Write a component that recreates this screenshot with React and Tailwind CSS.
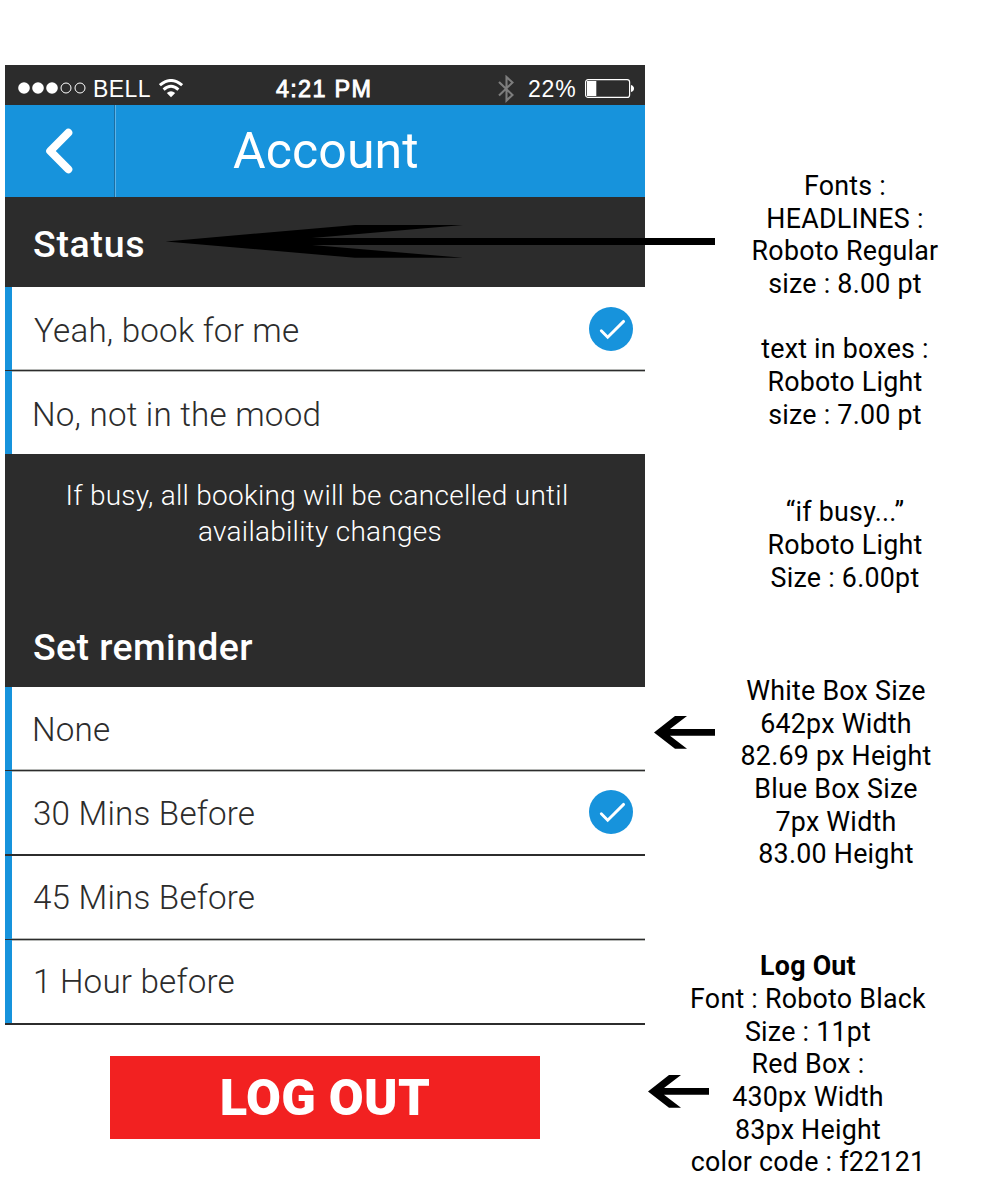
import React from 'react';

const Check = () => (
  <svg viewBox="0 0 44 44" className="h-11 w-11 shrink-0">
    <circle cx="22" cy="22" r="22" fill="#1793dc" />
    <path d="M12.3 23.8 L18.7 30.2 L34.6 14.4" fill="none" stroke="#fff" strokeWidth="2.9" strokeLinecap="round" />
  </svg>
);

function Row({ label, checked, indent, textShift, checkShift }) {
  return (
    <div className="flex h-[82px] border-l-[7px] border-[#1793dc] bg-white">
      <div className={`flex flex-1 items-center justify-between pr-3 ${indent}`}>
        <span className={`whitespace-nowrap text-[33.2px] font-light leading-none tracking-[0.2px] text-[#2c2c2c] ${textShift}`}>{label}</span>
        {checked && <div className={checkShift}><Check /></div>}
      </div>
    </div>
  );
}

const Line = ({ soft }) =>
  soft ? (
    <div className="h-[3px] border-l-[7px] border-[#1793dc] bg-[#b5b7b5] pt-px">
      <div className="-ml-[7px] h-px bg-[#2c2c2c]" />
    </div>
  ) : (
    <div className="h-[2px] bg-[#2c2c2c]" />
  );

function Note({ lines, className }) {
  return (
    <div className={`w-[260px] text-center text-[26.8px] leading-[32.7px] tracking-[0.25px] text-black ${className}`}>
      {lines.map((l, i) => (
        <p key={i} className="whitespace-nowrap">{l}</p>
      ))}
    </div>
  );
}

const SmallArrow = ({ className }) => (
  <svg viewBox="0 0 61 34" className={`absolute h-[34px] w-[61px] ${className}`}>
    <path d="M0 16.4 L21 0 H33 L16 13 H61 V19.8 H16 L33 32.8 H21 Z" fill="#000" />
  </svg>
);

const Wifi = () => (
  <svg viewBox="0 0 24 19" className="h-[19px] w-6">
    <g fill="none" stroke="#fff" strokeWidth="3">
      <path d="M0.9 6.2 Q12 -3.2 23.1 6.2" />
      <path d="M4.6 10.6 Q12 4 19.4 10.6" />
    </g>
    <path d="M7.8 13.9 Q12 10.4 16.2 13.9 L12 18.2 Z" fill="#fff" />
  </svg>
);

export default function App() {
  return (
    <div className="relative flex h-[1200px] w-[1000px] overflow-hidden bg-white font-['Roboto',sans-serif]">
      <main className="ml-[5px] mt-[65px] w-[640px] shrink-0">
        <div className="flex h-10 items-start bg-[#2c2c2c] pt-[10px] font-['Liberation_Sans',sans-serif] text-[23px] leading-[28px] text-white">
          <svg viewBox="0 0 69 12" className="ml-[12.5px] mt-[7px] h-3 w-[69px]">
            <circle cx="6" cy="6" r="5.8" fill="#fff" />
            <circle cx="20" cy="6" r="5.8" fill="#fff" />
            <circle cx="34" cy="6" r="5.8" fill="#fff" />
            <circle cx="48" cy="6" r="5" fill="none" stroke="#fff" />
            <circle cx="62" cy="6" r="5" fill="none" stroke="#fff" />
          </svg>
          <span className="ml-[6.5px] w-[66px] whitespace-nowrap tracking-[0.4px]">BELL</span>
          <div className="mt-1"><Wifi /></div>
          <span className="ml-[93px] w-[222px] whitespace-nowrap text-[23.4px] tracking-[1.3px] [-webkit-text-stroke:0.9px_white]">4:21 PM</span>
          <svg viewBox="0 0 16 28" className="h-7 w-4">
            <path d="M1 7 L14.5 20 L8.5 25.5 V2 L14.5 7.5 L1 20.5" fill="none" stroke="#7d7d7d" strokeWidth="2.1" />
          </svg>
          <span className="ml-[14px] w-[57px] whitespace-nowrap tracking-[0.8px]">22%</span>
          <svg viewBox="0 0 50 20" className="mt-1 h-5 w-[50px]">
            <rect x="0.6" y="0.6" width="44" height="17.8" rx="2.5" fill="none" stroke="#fff" strokeWidth="1.2" />
            <rect x="2" y="2" width="9.3" height="15" fill="#fff" />
            <path d="M46 6 Q49 7 49 9.5 Q49 12 46 13 Z" fill="#fff" />
          </svg>
        </div>
        <header className="flex h-[92px] items-center bg-[#1793dc] text-white">
          <div className="flex h-full w-[111px] items-center border-r border-[#5cb3e8]">
            <div className="flex h-full w-[110px] items-center border-r border-[#1c6ea2]">
              <svg viewBox="0 0 28 46" className="ml-10 h-[46px] w-7">
                <path d="M23.3 4.7 L5.2 23 L23.3 41.3" fill="none" stroke="#fff" strokeWidth="8" strokeLinecap="round" strokeLinejoin="round" />
              </svg>
            </div>
          </div>
          <h1 className="ml-[117px] whitespace-nowrap text-[50px] tracking-[0.1px]">Account</h1>
        </header>
        <h2 className="h-[90px] bg-[#2c2c2c] pl-7 text-[37.5px] font-medium leading-[95px] tracking-[0.7px] text-white">Status</h2>
        <Row label="Yeah, book for me" checked indent="pl-[22px]" textShift="mt-[6px]" checkShift="mt-[2px]" />
        <Line soft />
        <Row label="No, not in the mood" indent="pl-[20px]" textShift="mt-[4px]" />
        <div className="h-[233px] bg-[#2c2c2c] pt-6 text-white">
          <p className="-ml-[16px] text-center text-[28px] font-light leading-[36px] tracking-[0.27px]">If busy, all booking will be cancelled until</p>
          <p className="-ml-[10px] text-center text-[28px] font-light leading-[36px] tracking-[0.27px]">availability changes</p>
          <h2 className="pl-7 pt-[69px] text-[37.5px] font-medium leading-[57px] tracking-[0.4px]">Set reminder</h2>
        </div>
        <Row label="None" indent="pl-[20px]" textShift="mt-[3px]" />
        <Line soft />
        <Row label="30 Mins Before" checked indent="pl-[21px]" textShift="mt-[2px]" checkShift="-mt-[2px]" />
        <Line />
        <Row label="45 Mins Before" indent="pl-[21px]" textShift="mt-[2px]" />
        <Line soft />
        <Row label="1 Hour before" indent="pl-[21px]" textShift="mt-0" />
        <Line />
        <button className="ml-[105px] mt-[31px] h-[83px] w-[430px] bg-[#f22121] pt-px text-[50.6px] font-black tracking-[0.3px] text-white">LOG OUT</button>
      </main>
      <aside className="flex-1 pt-[170px]">
        <Note lines={['Fonts :', 'HEADLINES :', 'Roboto Regular', 'size : 8.00 pt']} className="ml-[70px]" />
        <Note lines={['text in boxes :', 'Roboto Light', 'size : 7.00 pt']} className="ml-[70px] mt-[32.5px]" />
        <Note lines={['“if busy...”', 'Roboto Light', 'Size : 6.00pt']} className="ml-[70px] mt-[65px]" />
        <Note lines={['White Box Size', '642px Width', '82.69 px Height', 'Blue Box Size', '7px Width', '83.00 Height']} className="ml-[61px] mt-[80.3px]" />
        <Note lines={[<b key="b">Log Out</b>, 'Font : Roboto Black', 'Size : 11pt', 'Red Box :', '430px Width', '83px Height', 'color code : f22121']} className="ml-[33px] mt-[79.2px]" />
      </aside>
      <svg viewBox="0 0 550 34" className="absolute left-[165px] top-[225px] h-[34px] w-[550px]">
        <path d="M0.7 16.4 L190 0 H298 L147 13 H550 V20 H147 L298 32.8 H190 Z" fill="#000" />
      </svg>
      <SmallArrow className="left-[654px] top-[716px]" />
      <SmallArrow className="left-[648px] top-[1075px]" />
    </div>
  );
}
